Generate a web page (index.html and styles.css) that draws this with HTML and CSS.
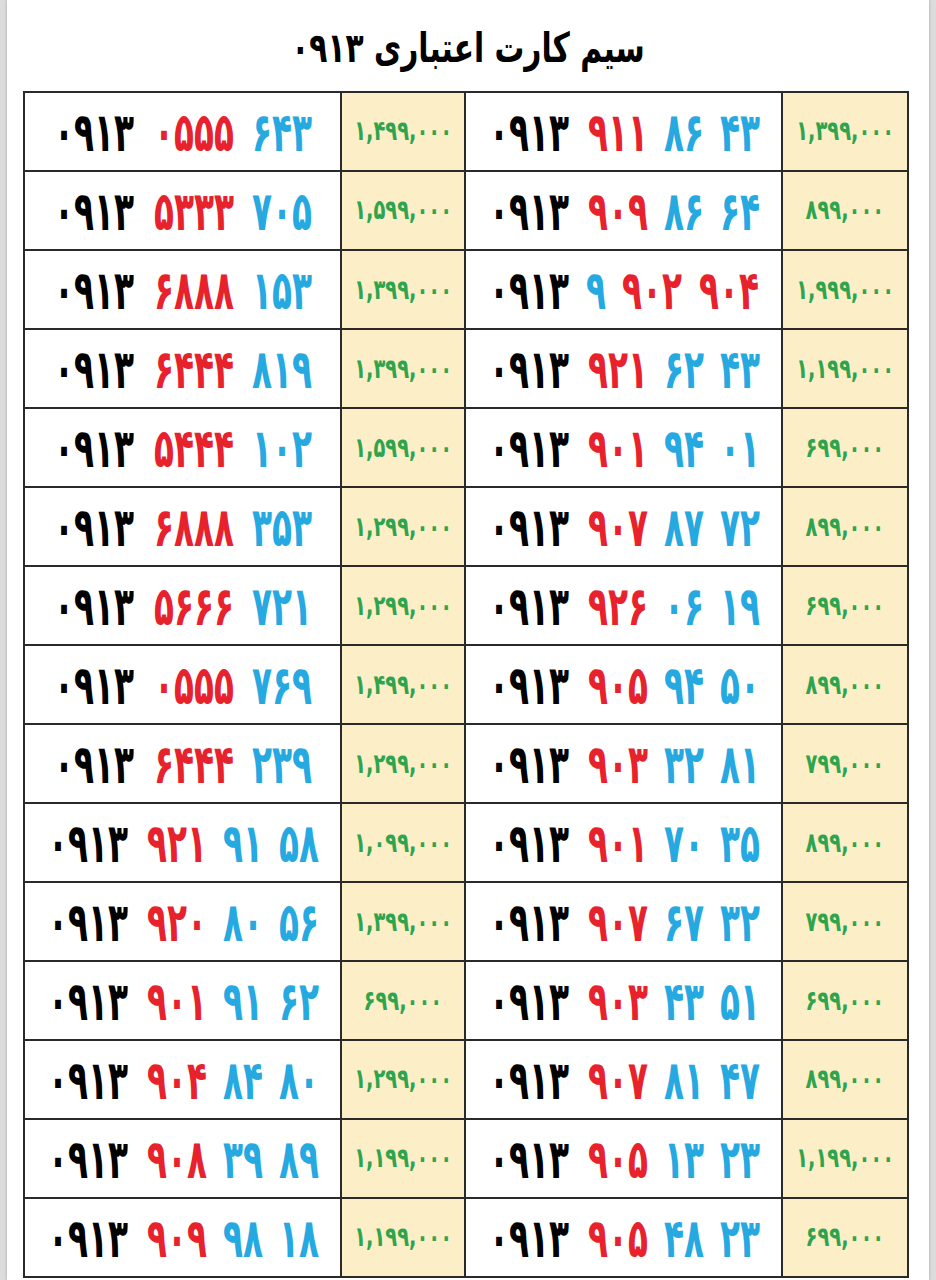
FILE: index.html
```html
<!DOCTYPE html>
<html lang="fa" dir="rtl">
<head>
<meta charset="utf-8">
<title>سیم کارت اعتباری ۰۹۱۳</title>
<link rel="stylesheet" href="styles.css">
</head>
<body>
<div class="page">
  <h1 class="title"><span class="title-text">سیم کارت اعتباری ۰۹۱۳</span></h1>
  <table class="sims">
    <colgroup><col class="c-price c-first"><col class="c-num"><col class="c-price"><col class="c-num"></colgroup>
    <tbody>
      <tr>
        <td class="price"><span>۱,۳۹۹,۰۰۰</span></td>
        <td class="num"><span class="k">۰۹۱۳</span><span class="r">۹۱۱</span><span class="b">۸۶</span><span class="b">۴۳</span></td>
        <td class="price"><span>۱,۴۹۹,۰۰۰</span></td>
        <td class="num"><span class="k">۰۹۱۳</span><span class="r">۰۵۵۵</span><span class="b">۶۴۳</span></td>
      </tr>
      <tr>
        <td class="price"><span>۸۹۹,۰۰۰</span></td>
        <td class="num"><span class="k">۰۹۱۳</span><span class="r">۹۰۹</span><span class="b">۸۶</span><span class="b">۶۴</span></td>
        <td class="price"><span>۱,۵۹۹,۰۰۰</span></td>
        <td class="num"><span class="k">۰۹۱۳</span><span class="r">۵۳۳۳</span><span class="b">۷۰۵</span></td>
      </tr>
      <tr>
        <td class="price"><span>۱,۹۹۹,۰۰۰</span></td>
        <td class="num"><span class="k">۰۹۱۳</span><span class="b">۹</span><span class="r">۹۰۲</span><span class="r">۹۰۴</span></td>
        <td class="price"><span>۱,۳۹۹,۰۰۰</span></td>
        <td class="num"><span class="k">۰۹۱۳</span><span class="r">۶۸۸۸</span><span class="b">۱۵۳</span></td>
      </tr>
      <tr>
        <td class="price"><span>۱,۱۹۹,۰۰۰</span></td>
        <td class="num"><span class="k">۰۹۱۳</span><span class="r">۹۲۱</span><span class="b">۶۲</span><span class="b">۴۳</span></td>
        <td class="price"><span>۱,۳۹۹,۰۰۰</span></td>
        <td class="num"><span class="k">۰۹۱۳</span><span class="r">۶۴۴۴</span><span class="b">۸۱۹</span></td>
      </tr>
      <tr>
        <td class="price"><span>۶۹۹,۰۰۰</span></td>
        <td class="num"><span class="k">۰۹۱۳</span><span class="r">۹۰۱</span><span class="b">۹۴</span><span class="b">۰۱</span></td>
        <td class="price"><span>۱,۵۹۹,۰۰۰</span></td>
        <td class="num"><span class="k">۰۹۱۳</span><span class="r">۵۴۴۴</span><span class="b">۱۰۲</span></td>
      </tr>
      <tr>
        <td class="price"><span>۸۹۹,۰۰۰</span></td>
        <td class="num"><span class="k">۰۹۱۳</span><span class="r">۹۰۷</span><span class="b">۸۷</span><span class="b">۷۲</span></td>
        <td class="price"><span>۱,۲۹۹,۰۰۰</span></td>
        <td class="num"><span class="k">۰۹۱۳</span><span class="r">۶۸۸۸</span><span class="b">۳۵۳</span></td>
      </tr>
      <tr>
        <td class="price"><span>۶۹۹,۰۰۰</span></td>
        <td class="num"><span class="k">۰۹۱۳</span><span class="r">۹۲۶</span><span class="b">۰۶</span><span class="b">۱۹</span></td>
        <td class="price"><span>۱,۲۹۹,۰۰۰</span></td>
        <td class="num"><span class="k">۰۹۱۳</span><span class="r">۵۶۶۶</span><span class="b">۷۲۱</span></td>
      </tr>
      <tr>
        <td class="price"><span>۸۹۹,۰۰۰</span></td>
        <td class="num"><span class="k">۰۹۱۳</span><span class="r">۹۰۵</span><span class="b">۹۴</span><span class="b">۵۰</span></td>
        <td class="price"><span>۱,۴۹۹,۰۰۰</span></td>
        <td class="num"><span class="k">۰۹۱۳</span><span class="r">۰۵۵۵</span><span class="b">۷۶۹</span></td>
      </tr>
      <tr>
        <td class="price"><span>۷۹۹,۰۰۰</span></td>
        <td class="num"><span class="k">۰۹۱۳</span><span class="r">۹۰۳</span><span class="b">۳۲</span><span class="b">۸۱</span></td>
        <td class="price"><span>۱,۲۹۹,۰۰۰</span></td>
        <td class="num"><span class="k">۰۹۱۳</span><span class="r">۶۴۴۴</span><span class="b">۲۳۹</span></td>
      </tr>
      <tr>
        <td class="price"><span>۸۹۹,۰۰۰</span></td>
        <td class="num"><span class="k">۰۹۱۳</span><span class="r">۹۰۱</span><span class="b">۷۰</span><span class="b">۳۵</span></td>
        <td class="price"><span>۱,۰۹۹,۰۰۰</span></td>
        <td class="num"><span class="k">۰۹۱۳</span><span class="r">۹۲۱</span><span class="b">۹۱</span><span class="b">۵۸</span></td>
      </tr>
      <tr>
        <td class="price"><span>۷۹۹,۰۰۰</span></td>
        <td class="num"><span class="k">۰۹۱۳</span><span class="r">۹۰۷</span><span class="b">۶۷</span><span class="b">۳۲</span></td>
        <td class="price"><span>۱,۳۹۹,۰۰۰</span></td>
        <td class="num"><span class="k">۰۹۱۳</span><span class="r">۹۲۰</span><span class="b">۸۰</span><span class="b">۵۶</span></td>
      </tr>
      <tr>
        <td class="price"><span>۶۹۹,۰۰۰</span></td>
        <td class="num"><span class="k">۰۹۱۳</span><span class="r">۹۰۳</span><span class="b">۴۳</span><span class="b">۵۱</span></td>
        <td class="price"><span>۶۹۹,۰۰۰</span></td>
        <td class="num"><span class="k">۰۹۱۳</span><span class="r">۹۰۱</span><span class="b">۹۱</span><span class="b">۶۲</span></td>
      </tr>
      <tr>
        <td class="price"><span>۸۹۹,۰۰۰</span></td>
        <td class="num"><span class="k">۰۹۱۳</span><span class="r">۹۰۷</span><span class="b">۸۱</span><span class="b">۴۷</span></td>
        <td class="price"><span>۱,۲۹۹,۰۰۰</span></td>
        <td class="num"><span class="k">۰۹۱۳</span><span class="r">۹۰۴</span><span class="b">۸۴</span><span class="b">۸۰</span></td>
      </tr>
      <tr>
        <td class="price"><span>۱,۱۹۹,۰۰۰</span></td>
        <td class="num"><span class="k">۰۹۱۳</span><span class="r">۹۰۵</span><span class="b">۱۳</span><span class="b">۲۳</span></td>
        <td class="price"><span>۱,۱۹۹,۰۰۰</span></td>
        <td class="num"><span class="k">۰۹۱۳</span><span class="r">۹۰۸</span><span class="b">۳۹</span><span class="b">۸۹</span></td>
      </tr>
      <tr>
        <td class="price"><span>۶۹۹,۰۰۰</span></td>
        <td class="num"><span class="k">۰۹۱۳</span><span class="r">۹۰۵</span><span class="b">۴۸</span><span class="b">۲۳</span></td>
        <td class="price"><span>۱,۱۹۹,۰۰۰</span></td>
        <td class="num"><span class="k">۰۹۱۳</span><span class="r">۹۰۹</span><span class="b">۹۸</span><span class="b">۱۸</span></td>
      </tr>
    </tbody>
  </table>
</div>
</body>
</html>
```

FILE: styles.css
```css
* { box-sizing: border-box; }
html, body {
  margin: 0;
  padding: 0;
}
body {
  background: #dcdcdc;
  font-family: "DejaVu Sans", "Noto Sans", sans-serif;
  width: 936px;
  height: 1280px;
  overflow: hidden;
}
.page {
  background: #ffffff;
  margin: 0 7px 0 7px;
  height: 1280px;
  padding: 0 20px;
  box-shadow: 0 0 3px rgba(0,0,0,0.25);
}
.title {
  margin: 0;
  height: 91px;
  padding-top: 26px;
  font-size: 33px;
  line-height: 44px;
  font-weight: bold;
  text-align: center;
  color: #000;
  font-family: "DejaVu Sans Condensed", "DejaVu Sans", sans-serif;
}
.title-text {
  display: inline-block;
  transform: scaleY(1.25);
}
.sims {
  width: 882px;
  border-collapse: collapse;
  table-layout: fixed;
  border: 2px solid #1e1e1e;
}
.c-num { width: 317px; }
.c-price { width: 124px; }
.c-first { width: 126px; }
.sims td {
  border: 2px solid #2a2a2a;
  height: 79px;
  padding: 0;
  text-align: center;
  vertical-align: middle;
}
.price {
  background: #fcefc8;
  color: #2ea44f;
  font-family: "DejaVu Sans Condensed", "DejaVu Sans", sans-serif;
  font-size: 23px;
  font-weight: 600;
  direction: ltr;
  line-height: 1;
}
.price span {
  display: inline-block;
  transform: scale(0.94, 1.2);
}
.num {
  background: #ffffff;
  direction: ltr;
  font-family: "DejaVu Sans Condensed", "DejaVu Sans", sans-serif;
  font-weight: bold;
  font-size: 40px;
  line-height: 1;
  white-space: nowrap;
}
.num span {
  display: inline-block;
  margin: 0 6px;
  transform: scale(0.91, 1.35);
}
.k { color: #000000; }
.r { color: #e8222c; }
.b { color: #26a9e1; }
```
